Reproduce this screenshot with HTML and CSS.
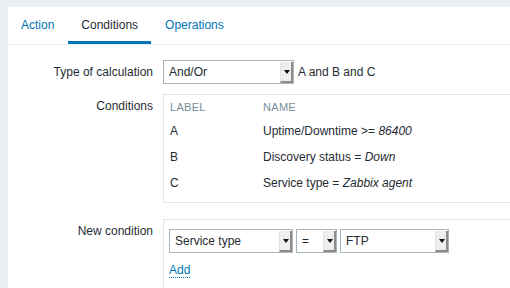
FILE: index.html
```html
<!DOCTYPE html>
<html lang="en">
<head>
<meta charset="utf-8">
<title>Action conditions</title>
<link rel="stylesheet" href="styles.css">
</head>
<body>
<div class="page">
  <div class="panel">
    <nav class="tabs">
      <a class="tab">Action</a>
      <a class="tab active">Conditions</a>
      <a class="tab">Operations</a>
    </nav>
    <div class="form">
      <div class="label">Type of calculation</div>
      <div class="field inline">
        <div class="select w-calc"><span class="value">And/Or</span><span class="arrow"></span></div>
        <span class="expr">A and B and C</span>
      </div>

      <div class="label">Conditions</div>
      <div class="field">
        <div class="box cond-box">
          <div class="cond-table">
            <div class="th">Label</div><div class="th">Name</div>
            <div class="row"><div class="td">A</div><div class="td">Uptime/Downtime &gt;= <em>86400</em></div></div>
            <div class="row"><div class="td">B</div><div class="td">Discovery status = <em>Down</em></div></div>
            <div class="row"><div class="td">C</div><div class="td">Service type = <em>Zabbix agent</em></div></div>
          </div>
        </div>
      </div>

      <div class="label gap">New condition</div>
      <div class="field gap">
        <div class="box new-box">
          <div class="selects">
            <div class="select w-type"><span class="value">Service type</span><span class="arrow"></span></div>
            <div class="select w-op"><span class="value">=</span><span class="arrow"></span></div>
            <div class="select w-val"><span class="value">FTP</span><span class="arrow"></span></div>
          </div>
          <a class="add">Add</a>
        </div>
      </div>
    </div>
  </div>
</div>
</body>
</html>
```
FILE: styles.css
```css
html, body {
  margin: 0;
  padding: 0;
  overflow: hidden;
  height: 100%;
}
body {
  background: #ebeef0;
  font-family: "Liberation Sans", Arial, sans-serif;
  font-size: 12px;
  color: #1f2c33;
}
.page {
  padding: 7px 0 0 8px;
  height: 100%;
  box-sizing: border-box;
}
.panel {
  background: #ffffff;
  height: 100%;
  overflow: hidden;
}
.tabs {
  display: flex;
  gap: 1px;
  border-bottom: 1px solid #ebeef0;
  height: 37px;
}
.tab {
  padding: 3px 13px 0;
  line-height: 31px;
  height: 31px;
  border-bottom: 3px solid transparent;
  color: #0275b8;
}
.tab.active {
  color: #1f2c33;
  border-bottom-color: #0275b8;
}
.form {
  display: grid;
  grid-template-columns: 145px 1fr;
  column-gap: 10px;
  row-gap: 10px;
  padding-top: 15px;
}
.label {
  text-align: right;
  line-height: 24px;
}
.gap {
  margin-top: 6px;
}
.field.inline {
  display: flex;
  align-items: center;
  gap: 4px;
}
.select {
  box-sizing: border-box;
  height: 24px;
  border: 1px solid #a9b6bd;
  background: #fff;
  display: flex;
  align-items: stretch;
  justify-content: space-between;
}
.select .value {
  padding-left: 5px;
  line-height: 22px;
  white-space: nowrap;
}
.select .arrow {
  box-sizing: border-box;
  width: 13px;
  margin-top: 1px;
  background: #eeeeee;
  border-left: 1px solid #e2e2e2;
  border-right: 2px solid #8c8c8c;
  border-bottom: 2px solid #8c8c8c;
  display: flex;
  align-items: center;
  justify-content: center;
}
.select .arrow::before {
  content: "";
  border-left: 3.5px solid transparent;
  border-right: 3.5px solid transparent;
  border-top: 4px solid #111;
  margin-left: 1px;
}
.w-calc { width: 131px; }
.w-type { width: 124px; }
.w-op { width: 41px; }
.w-val { width: 109px; }
.expr {
  line-height: 24px;
}
.box {
  border: 1px solid #e6e6e6;
  border-right: none;
  padding: 3px 6px 6px;
}
.cond-table {
  display: grid;
  grid-template-columns: 93px 1fr;
}
.cond-table .th {
  font-size: 11px;
  text-transform: uppercase;
  color: #768d99;
  line-height: 18px;
  letter-spacing: 0.3px;
  margin-bottom: 2px;
}
.cond-table .row {
  display: contents;
}
.cond-table .td {
  line-height: 26px;
}
.new-box {
  padding: 9px 5px 20px;
  border-bottom: none;
}
.selects {
  display: flex;
  gap: 3px;
}
.add {
  display: inline-block;
  margin-top: 10px;
  color: #0275b8;
  line-height: 14px;
  border-bottom: 1px dotted #0275b8;
}
```
